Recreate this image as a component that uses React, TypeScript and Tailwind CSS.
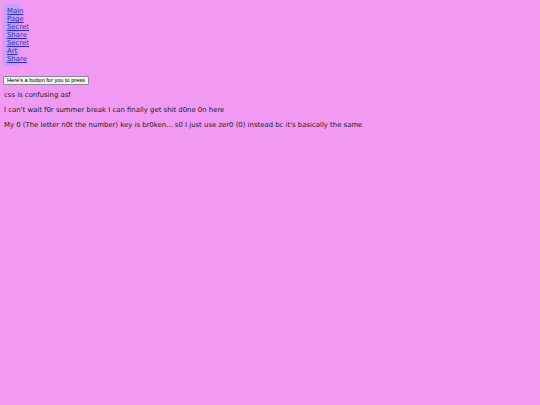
export default function App() {
  const links = ["Main", "Page", "Secret", "Share", "Secret", "Art", "Share"];
  return (
    <div className="min-h-[405px] bg-[#f09af3] pl-[3px] pt-[4px] font-['DejaVu_Sans',sans-serif] text-[6.9px] text-[#1a1a1a]">
      <nav className="w-[16px] bg-[#c99ff3] py-[3px]">
        <ul className="flex flex-col">
          {links.map((l, i) => (
            <li key={i} className="pl-[4px] leading-[8px]">
              <a href="#" className="text-[#2a2ad6] underline">
                {l}
              </a>
            </li>
          ))}
        </ul>
      </nav>
      <button className="mt-[10px] h-[9px] rounded-[1px] border border-[#8a8a8a] bg-[#f3f3f3] px-[3px] font-['Liberation_Sans',sans-serif] text-[5.6px] leading-none text-black">
        Here's a button for you to press
      </button>
      <p className="mt-[6px] pl-[1px] leading-[8px]">css is confusing asf</p>
      <p className="mt-[7px] pl-[1px] leading-[8px]">
        I can't wait f0r summer break I can finally get shit d0ne 0n here
      </p>
      <p className="mt-[7px] pl-[1px] leading-[8px]">
        My 0 (The letter n0t the number) key is br0ken... s0 I just use zer0 (0) instead bc it's basically the same
      </p>
    </div>
  );
}
